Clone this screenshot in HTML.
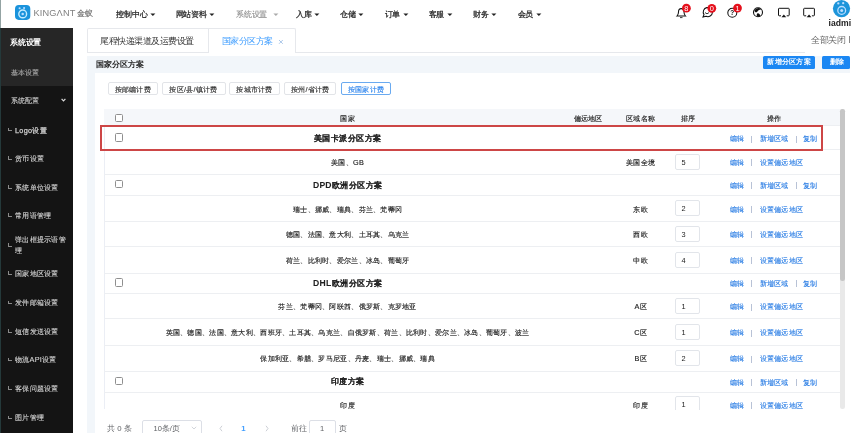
<!DOCTYPE html>
<html><head><meta charset="utf-8">
<style>
*{box-sizing:border-box;margin:0;padding:0}
html,body{width:851px;height:433px;overflow:hidden;background:#fff}
body{position:relative;font-family:"Liberation Sans",sans-serif;color:#303133}
.a{position:absolute;white-space:nowrap}
.c{position:absolute;white-space:nowrap;transform:translateX(-50%)}
.nav{font-size:7.9px;letter-spacing:-0.1px;font-weight:500;color:#222;-webkit-text-stroke:0.22px #222;top:10px;line-height:10px}
.tri{position:absolute;width:0;height:0;border-left:2.6px solid transparent;border-right:2.6px solid transparent;border-top:2.8px solid #2b2b2b}
.side{position:absolute;left:1px;width:72px;top:28px;bottom:0;background:#141414}
.sitem{position:absolute;left:15px;font-size:7.28px;letter-spacing:0.28px;color:#d2d2d2;-webkit-text-stroke:0.12px #d2d2d2;line-height:9px}
.lsym{position:absolute;left:8.2px;width:3.4px;height:3.6px;border-left:0.7px solid #8a8a8a;border-bottom:0.7px solid #8a8a8a}
.btn{position:absolute;top:82px;height:13px;border:0.8px solid #e2e4e8;border-radius:2px;font-size:7.28px;letter-spacing:0.28px;color:#333;line-height:13.2px;text-align:center;background:#fff;-webkit-text-stroke:0.15px #333}
.row{position:absolute;left:104.2px;width:736px;border-bottom:0.8px solid #edeff2}
.cb{position:absolute;left:114.6px;width:8.1px;height:8.4px;border:0.85px solid #8f8f8f;border-radius:1.5px;background:#fff}
.t{font-size:7.28px;letter-spacing:0.28px;color:#222;-webkit-text-stroke:0.15px #222;line-height:9px}
.g{font-size:7.7px;letter-spacing:0.5px;font-weight:bold;color:#1f1f1f;line-height:10px;-webkit-text-stroke:0.05px #1f1f1f}
.lk{font-size:7.28px;letter-spacing:0.28px;color:#2a7de4;-webkit-text-stroke:0.12px #2a7de4;line-height:9px}
.sep{position:absolute;width:0.7px;height:7px;background:#b8c2d6}
.inp{position:absolute;left:675px;width:25.2px;height:16.2px;border:0.8px solid #e2e5ea;border-radius:2px;font-size:7.4px;line-height:15.6px;padding-left:5.2px;color:#222;background:#fff}
</style></head><body><div style="position:absolute;left:0;top:0;width:851px;height:433px;will-change:transform;overflow:hidden">
<!-- left strip -->
<div class="a" style="left:0;top:0;width:1px;height:28px;background:#93a3a3"></div>
<div class="a" style="left:0;top:28px;width:1px;height:405px;background:#24393a"></div>

<!-- logo -->
<svg class="a" style="left:15px;top:5px" width="16" height="16" viewBox="0 0 16 16">
<rect x="0" y="0" width="15.3" height="14.9" rx="3.8" fill="#1a93dc"/>
<circle cx="4.6" cy="3.3" r="1.05" fill="#bdf"/><circle cx="9.1" cy="3.1" r="1.05" fill="#bdf"/>
<circle cx="7.7" cy="8.9" r="3.9" fill="none" stroke="#c4ecff" stroke-width="1.4"/>
<circle cx="7.7" cy="8.9" r="1.25" fill="#bdf"/>
</svg>
<div class="a" style="left:33.5px;top:8.1px;font-size:9.2px;line-height:10px;color:#808080;letter-spacing:0.16px">KINGΛNT</div>
<div class="a" style="left:77px;top:9px;font-size:7.8px;letter-spacing:0.3px;line-height:9px;color:#666;-webkit-text-stroke:0.15px #666">金蚁</div>

<!-- nav -->
<div class="a nav" style="left:116px">控制中心</div><svg class="a" style="left:149.5px;top:13px" width="6" height="4" viewBox="0 0 6 4"><path d="M0.4 0.4 L5.4 0.4 L2.9 3.1 Z" fill="#222"/></svg>
<div class="a nav" style="left:175.5px">网站资料</div><svg class="a" style="left:209.3px;top:13px" width="6" height="4" viewBox="0 0 6 4"><path d="M0.4 0.4 L5.4 0.4 L2.9 3.1 Z" fill="#222"/></svg>
<div class="a nav" style="left:235.8px;color:#8e8e8e;font-weight:normal;-webkit-text-stroke:0.12px #8e8e8e">系统设置</div><svg class="a" style="left:273px;top:13px" width="6" height="4" viewBox="0 0 6 4"><path d="M0.4 0.4 L5.4 0.4 L2.9 3.1 Z" fill="#aaa"/></svg>
<div class="a nav" style="left:296px">入库</div><svg class="a" style="left:313.9px;top:13px" width="6" height="4" viewBox="0 0 6 4"><path d="M0.4 0.4 L5.4 0.4 L2.9 3.1 Z" fill="#222"/></svg>
<div class="a nav" style="left:340px">仓储</div><svg class="a" style="left:358.2px;top:13px" width="6" height="4" viewBox="0 0 6 4"><path d="M0.4 0.4 L5.4 0.4 L2.9 3.1 Z" fill="#222"/></svg>
<div class="a nav" style="left:384.6px">订单</div><svg class="a" style="left:402.7px;top:13px" width="6" height="4" viewBox="0 0 6 4"><path d="M0.4 0.4 L5.4 0.4 L2.9 3.1 Z" fill="#222"/></svg>
<div class="a nav" style="left:428.5px">客服</div><svg class="a" style="left:446.7px;top:13px" width="6" height="4" viewBox="0 0 6 4"><path d="M0.4 0.4 L5.4 0.4 L2.9 3.1 Z" fill="#222"/></svg>
<div class="a nav" style="left:473px">财务</div><svg class="a" style="left:491.2px;top:13px" width="6" height="4" viewBox="0 0 6 4"><path d="M0.4 0.4 L5.4 0.4 L2.9 3.1 Z" fill="#222"/></svg>
<div class="a nav" style="left:517.6px">会员</div><svg class="a" style="left:535.7px;top:13px" width="6" height="4" viewBox="0 0 6 4"><path d="M0.4 0.4 L5.4 0.4 L2.9 3.1 Z" fill="#222"/></svg>

<!-- header icons -->
<svg class="a" style="left:670px;top:0" width="181" height="28" viewBox="670 0 181 28">
 <!-- bell -->
 <path d="M677 16 Q678.5 14.5 678.5 12 Q678.5 8.6 681.2 8.6 Q684 8.6 684 12 Q684 14.5 685.5 16 Z" fill="none" stroke="#111" stroke-width="1.05"/>
 <line x1="680" y1="17.6" x2="682.5" y2="17.6" stroke="#222" stroke-width="0.9"/>
 <circle cx="686.4" cy="8.2" r="4.4" fill="#e5101c"/>
 <text x="686.4" y="10.8" font-size="7.4" fill="#fff" text-anchor="middle" font-family="Liberation Sans">8</text>
 <!-- chat -->
 <path d="M703 17 L704 14.6 A4.6 4.6 0 1 1 706 16.3 Z" fill="none" stroke="#111" stroke-width="1.05"/>
 <path d="M705 12.6 Q707 15 709 12.6" fill="none" stroke="#222" stroke-width="0.9"/>
 <circle cx="711.8" cy="8.3" r="4.4" fill="#e5101c"/>
 <text x="711.8" y="10.9" font-size="7.4" fill="#fff" text-anchor="middle" font-family="Liberation Sans">0</text>
 <!-- help -->
 <circle cx="732.3" cy="12.8" r="4.5" fill="none" stroke="#111" stroke-width="1.05"/>
 <text x="732.3" y="15.4" font-size="6.5" fill="#111" text-anchor="middle" font-family="Liberation Sans" font-weight="bold">?</text>
 <circle cx="737.5" cy="8.1" r="4.4" fill="#e5101c"/>
 <text x="737.5" y="10.7" font-size="7.4" fill="#fff" text-anchor="middle" font-family="Liberation Sans">1</text>
 <!-- globe -->
 <circle cx="758" cy="12.25" r="4.5" fill="#fff" stroke="#111" stroke-width="1.1"/>
 <path d="M754.2 10.6 Q755.5 8.2 758.6 7.9 Q760.6 8.2 761.2 9.4 Q759.6 9.4 758.2 10.6 Q757.4 12 756 12.6 Q754.8 12.2 754.2 10.6Z" fill="#111"/>
 <path d="M757.2 13.4 Q758.6 13 759.8 14.6 Q760.6 16 760.4 16.6 Q758.6 17 757.4 16.6 Q755.8 15.4 757.2 13.4Z" fill="#111"/>
 <!-- airplay 1 -->
 <path d="M781 15.8 L779.2 15.8 Q778.5 15.8 778.5 15 L778.5 9 Q778.5 8.3 779.2 8.3 L788.5 8.3 Q789.2 8.3 789.2 9 L789.2 15 Q789.2 15.8 788.5 15.8 L786.7 15.8" fill="none" stroke="#111" stroke-width="1"/>
 <path d="M781.5 17.2 L786.2 17.2 L783.85 14.6 Z" fill="#111"/>
 <!-- airplay 2 -->
 <path d="M806.2 15.8 L804.4 15.8 Q803.7 15.8 803.7 15 L803.7 9 Q803.7 8.3 804.4 8.3 L813.7 8.3 Q814.4 8.3 814.4 9 L814.4 15 Q814.4 15.8 813.7 15.8 L811.9 15.8" fill="none" stroke="#111" stroke-width="1"/>
 <path d="M806.7 17.2 L811.4 17.2 L809.05 14.6 Z" fill="#111"/>
 <!-- avatar -->
 <circle cx="841.5" cy="8.6" r="8.6" fill="#1d95da"/>
 <circle cx="838.3" cy="3.4" r="1.15" fill="#bdf"/><circle cx="843.2" cy="3.2" r="1.15" fill="#bdf"/>
 <circle cx="841.7" cy="10.4" r="3.9" fill="none" stroke="#bdf" stroke-width="1.3"/>
 <circle cx="841.7" cy="10.4" r="1.5" fill="#bdf"/>
</svg>
<div class="a" style="left:828.6px;top:17.5px;font-size:8.6px;font-weight:bold;line-height:10px;color:#222">iadmi</div>

<!-- sidebar -->
<div class="side"></div>
<div class="a" style="left:1px;top:28px;width:72px;height:58px;background:#262626"></div>
<div class="a" style="left:9.8px;top:38px;font-size:7.9px;letter-spacing:-0.1px;font-weight:bold;color:#fff;line-height:9px">系统设置</div>
<div class="a" style="left:10.5px;top:67.5px;font-size:7.28px;letter-spacing:0.28px;color:#a8a8a8;-webkit-text-stroke:0.12px #a8a8a8;line-height:9px">基本设置</div>
<div class="a" style="left:10.5px;top:95.5px;font-size:7.28px;letter-spacing:0.28px;color:#c8c8c8;-webkit-text-stroke:0.12px #c8c8c8;line-height:9px">系统配置</div>
<svg class="a" style="left:61px;top:98px" width="5" height="4" viewBox="0 0 5 4"><path d="M0.6 0.9 L2.5 2.9 L4.4 0.9" fill="none" stroke="#ddd" stroke-width="1.2"/></svg>

<div class="lsym" style="top:127.8px"></div><div class="sitem" style="top:125.5px;-webkit-text-stroke:0.25px #d2d2d2">Logo设置</div>
<div class="lsym" style="top:156px"></div><div class="sitem" style="top:154px">货币设置</div>
<div class="lsym" style="top:185px"></div><div class="sitem" style="top:182.5px">系统单位设置</div>
<div class="lsym" style="top:213.3px"></div><div class="sitem" style="top:211px">常用语管理</div>
<div class="lsym" style="top:243px"></div><div class="sitem" style="top:235.2px;line-height:10.4px;white-space:normal;width:52px">弹出框提示语管理</div>
<div class="lsym" style="top:271.2px"></div><div class="sitem" style="top:268.7px">国家地区设置</div>
<div class="lsym" style="top:300.7px"></div><div class="sitem" style="top:298.2px">发件邮箱设置</div>
<div class="lsym" style="top:329px"></div><div class="sitem" style="top:326.5px">短信发送设置</div>
<div class="lsym" style="top:357.7px"></div><div class="sitem" style="top:355.2px">物流API设置</div>
<div class="lsym" style="top:386.4px"></div><div class="sitem" style="top:383.9px">客保问题设置</div>
<div class="lsym" style="top:415.5px"></div><div class="sitem" style="top:413px">图片管理</div>

<!-- tabs -->
<div class="a" style="left:87px;top:52px;width:718px;height:0.8px;background:#e6e8ec"></div>
<div class="a" style="left:87px;top:28px;width:209.3px;height:24.8px;border:0.8px solid #e6e8ec;border-bottom:none;border-radius:2px 2px 0 0;background:#fff"></div>
<div class="a" style="left:87px;top:52px;width:121.5px;height:0.8px;background:#e6e8ec"></div>
<div class="a" style="left:208px;top:28.5px;width:0.8px;height:24.3px;background:#e6e8ec"></div>
<div class="a" style="left:100.2px;top:36.3px;font-size:8.5px;letter-spacing:-0.5px;line-height:10px;color:#333">尾程快递渠道及运费设置</div>
<div class="a" style="left:221.5px;top:36.3px;font-size:8.5px;letter-spacing:-0.5px;line-height:10px;color:#409eff">国家分区方案</div>
<svg class="a" style="left:278px;top:39px" width="6" height="6" viewBox="0 0 6 6"><path d="M1 1 L4.8 4.8 M4.8 1 L1 4.8" stroke="#8fb4e0" stroke-width="0.75"/></svg>
<div class="a" style="left:811px;top:34.5px;font-size:8.5px;letter-spacing:-0.5px;line-height:10px;color:#666">全部关闭</div><div class="a" style="left:849px;top:35.8px;width:0.8px;height:7.2px;background:#888"></div>

<!-- content bg -->
<div class="a" style="left:87px;top:55.5px;width:764px;height:378px;background:#f2f6fa"></div>
<div class="a" style="left:95px;top:73px;width:756px;height:360px;background:#fff"></div>
<div class="a" style="left:96px;top:59.8px;font-size:7.9px;letter-spacing:-0.1px;font-weight:bold;line-height:10px;color:#1f1f1f">国家分区方案</div>
<div class="a" style="left:763.2px;top:56px;width:51.9px;height:12.5px;border-radius:1.5px;background:#1b87f3;color:#fff;font-size:7.28px;letter-spacing:0.28px;font-weight:bold;line-height:12.7px;text-align:center">新增分区方案</div>
<div class="a" style="left:822px;top:56.1px;width:28px;padding-left:3px;height:12.5px;border-radius:1.5px;background:#1b87f3;color:#fff;font-size:7.28px;letter-spacing:0.28px;font-weight:bold;line-height:12.7px;text-align:center">删除</div>
<div class="a" style="left:849.5px;top:55.5px;width:1.5px;height:378px;background:#fff"></div>

<!-- filter buttons -->
<div class="btn" style="left:107.5px;width:50.5px">按邮编计费</div>
<div class="btn" style="left:161.6px;width:64px">按区/县/镇计费</div>
<div class="btn" style="left:229px;width:51px">按城市计费</div>
<div class="btn" style="left:284px;width:52.4px">按州/省计费</div>
<div class="btn" style="left:341px;width:50px;border-color:#6aaaf0;color:#3388ee;-webkit-text-stroke:0.15px #3388ee">按国家计费</div>

<!-- table -->
<div class="a" style="left:104.2px;top:109px;width:0.8px;height:300px;background:#ebeef5"></div>
<div class="row" style="top:109px;height:17px;background:#f5f7fa"></div>
<div class="cb" style="top:113.7px"></div>
<div class="c t" style="left:347.6px;top:114.1px">国家</div>
<div class="c t" style="left:588.2px;top:114.1px">偏远地区</div>
<div class="c t" style="left:640.7px;top:114.1px">区域名称</div>
<div class="c t" style="left:688.4px;top:114.1px">排序</div>
<div class="c t" style="left:774.5px;top:114.1px">操作</div>

<div class="a" style="left:104px;top:126px;width:737px;height:283.7px;overflow:hidden">
<div class="row" style="left:0.2px;top:0.00px;height:23.90px"></div>
<div class="cb" style="left:10.80px;top:7.40px;"></div>
<div class="c g" style="left:243.80px;top:7.50px;">美国卡派分区方案</div>
<div class="a lk" style="left:625.80px;top:8.30px;">编辑</div>
<div class="sep" style="left:646.90px;top:9.60px;"></div>
<div class="a lk" style="left:655.60px;top:8.30px;">新增区域</div>
<div class="sep" style="left:691.50px;top:9.60px;"></div>
<div class="a lk" style="left:699.00px;top:8.30px;">复制</div>
<div class="row" style="left:0.2px;top:23.50px;height:25.15px"></div>
<div class="c t" style="left:243.60px;top:31.90px;">美国、GB</div>
<div class="c t" style="left:536.70px;top:31.90px;">美国全境</div>
<div class="inp" style="left:571.20px;top:27.60px;">5</div>
<div class="a lk" style="left:625.80px;top:31.90px;">编辑</div>
<div class="sep" style="left:646.90px;top:33.20px;"></div>
<div class="a lk" style="left:655.60px;top:31.90px;">设置偏远地区</div>
<div class="row" style="left:0.2px;top:48.25px;height:21.65px"></div>
<div class="cb" style="left:10.80px;top:53.80px;"></div>
<div class="c g" style="left:243.80px;top:53.90px;"><span style="letter-spacing:0.1px;font-size:8.6px">DPD</span>欧洲分区方案</div>
<div class="a lk" style="left:625.80px;top:54.70px;">编辑</div>
<div class="sep" style="left:646.90px;top:56.00px;"></div>
<div class="a lk" style="left:655.60px;top:54.70px;">新增区域</div>
<div class="sep" style="left:691.50px;top:56.00px;"></div>
<div class="a lk" style="left:699.00px;top:54.70px;">复制</div>
<div class="row" style="left:0.2px;top:69.50px;height:26.10px"></div>
<div class="c t" style="left:243.60px;top:78.60px;">瑞士、挪威、瑞典、芬兰、梵蒂冈</div>
<div class="c t" style="left:536.70px;top:78.60px;">东欧</div>
<div class="inp" style="left:571.20px;top:74.30px;">2</div>
<div class="a lk" style="left:625.80px;top:78.60px;">编辑</div>
<div class="sep" style="left:646.90px;top:79.90px;"></div>
<div class="a lk" style="left:655.60px;top:78.60px;">设置偏远地区</div>
<div class="row" style="left:0.2px;top:95.20px;height:25.70px"></div>
<div class="c t" style="left:243.60px;top:104.10px;">德国、法国、意大利、土耳其、乌克兰</div>
<div class="c t" style="left:536.70px;top:104.10px;">西欧</div>
<div class="inp" style="left:571.20px;top:99.80px;">3</div>
<div class="a lk" style="left:625.80px;top:104.10px;">编辑</div>
<div class="sep" style="left:646.90px;top:105.40px;"></div>
<div class="a lk" style="left:655.60px;top:104.10px;">设置偏远地区</div>
<div class="row" style="left:0.2px;top:120.50px;height:27.20px"></div>
<div class="c t" style="left:243.60px;top:129.90px;">荷兰、比利时、爱尔兰、冰岛、葡萄牙</div>
<div class="c t" style="left:536.70px;top:129.90px;">中欧</div>
<div class="inp" style="left:571.20px;top:125.60px;">4</div>
<div class="a lk" style="left:625.80px;top:129.90px;">编辑</div>
<div class="sep" style="left:646.90px;top:131.20px;"></div>
<div class="a lk" style="left:655.60px;top:129.90px;">设置偏远地区</div>
<div class="row" style="left:0.2px;top:147.30px;height:20.40px"></div>
<div class="cb" style="left:10.80px;top:152.20px;"></div>
<div class="c g" style="left:243.80px;top:152.30px;"><span style="letter-spacing:0.3px;font-size:8.6px">DHL</span>欧洲分区方案</div>
<div class="a lk" style="left:625.80px;top:153.10px;">编辑</div>
<div class="sep" style="left:646.90px;top:154.40px;"></div>
<div class="a lk" style="left:655.60px;top:153.10px;">新增区域</div>
<div class="sep" style="left:691.50px;top:154.40px;"></div>
<div class="a lk" style="left:699.00px;top:153.10px;">复制</div>
<div class="row" style="left:0.2px;top:167.30px;height:26.10px"></div>
<div class="c t" style="left:243.60px;top:176.30px;">芬兰、梵蒂冈、阿联酋、俄罗斯、克罗地亚</div>
<div class="c t" style="left:536.70px;top:176.30px;">A区</div>
<div class="inp" style="left:571.20px;top:172.00px;">1</div>
<div class="a lk" style="left:625.80px;top:176.30px;">编辑</div>
<div class="sep" style="left:646.90px;top:177.60px;"></div>
<div class="a lk" style="left:655.60px;top:176.30px;">设置偏远地区</div>
<div class="row" style="left:0.2px;top:193.00px;height:26.70px"></div>
<div class="c t" style="left:243.60px;top:202.30px;">英国、德国、法国、意大利、西班牙、土耳其、乌克兰、白俄罗斯、荷兰、比利时、爱尔兰、冰岛、葡萄牙、波兰</div>
<div class="c t" style="left:536.70px;top:202.30px;">C区</div>
<div class="inp" style="left:571.20px;top:198.00px;">1</div>
<div class="a lk" style="left:625.80px;top:202.30px;">编辑</div>
<div class="sep" style="left:646.90px;top:203.60px;"></div>
<div class="a lk" style="left:655.60px;top:202.30px;">设置偏远地区</div>
<div class="row" style="left:0.2px;top:219.30px;height:26.35px"></div>
<div class="c t" style="left:243.60px;top:228.40px;">保加利亚、希腊、罗马尼亚、丹麦、瑞士、挪威、瑞典</div>
<div class="c t" style="left:536.70px;top:228.40px;">B区</div>
<div class="inp" style="left:571.20px;top:224.10px;">2</div>
<div class="a lk" style="left:625.80px;top:228.40px;">编辑</div>
<div class="sep" style="left:646.90px;top:229.70px;"></div>
<div class="a lk" style="left:655.60px;top:228.40px;">设置偏远地区</div>
<div class="row" style="left:0.2px;top:245.25px;height:21.65px"></div>
<div class="cb" style="left:10.80px;top:250.80px;"></div>
<div class="c g" style="left:243.80px;top:250.90px;">印度方案</div>
<div class="a lk" style="left:625.80px;top:251.70px;">编辑</div>
<div class="sep" style="left:646.90px;top:253.00px;"></div>
<div class="a lk" style="left:655.60px;top:251.70px;">新增区域</div>
<div class="sep" style="left:691.50px;top:253.00px;"></div>
<div class="a lk" style="left:699.00px;top:251.70px;">复制</div>
<div class="row" style="left:0.2px;top:266.50px;height:26.40px"></div>
<div class="c t" style="left:243.60px;top:274.60px;">印度</div>
<div class="c t" style="left:536.70px;top:274.60px;">印度</div>
<div class="inp" style="left:571.20px;top:270.30px;">1</div>
<div class="a lk" style="left:625.80px;top:274.60px;">编辑</div>
<div class="sep" style="left:646.90px;top:275.90px;"></div>
<div class="a lk" style="left:655.60px;top:274.60px;">设置偏远地区</div>
</div>
<!-- scrollbar -->
<div class="a" style="left:840px;top:109px;width:4.5px;height:300px;border-radius:2.2px;background:#e9e9e9"></div><div class="a" style="left:840px;top:109px;width:4.5px;height:172px;border-radius:2.2px;background:#c6c6c6"></div>

<!-- red box -->
<div class="a" style="left:100.2px;top:124.6px;width:723px;height:26.5px;border:2px solid #cd4646"></div>

<!-- pagination -->
<div class="a" style="left:107px;top:424.2px;font-size:7.8px;line-height:10px;color:#606266">共 0 条</div>
<div class="a" style="left:141.6px;top:420.4px;width:60.5px;height:16px;border:0.7px solid #dcdfe6;border-radius:2px;background:#fff"></div>
<div class="a" style="left:153.5px;top:424.2px;font-size:7.5px;line-height:10px;color:#606266">10条/页</div>
<svg class="a" style="left:191px;top:426px" width="6" height="4" viewBox="0 0 6 4"><path d="M0.8 0.8 L3 3 L5.2 0.8" fill="none" stroke="#c0c4cc" stroke-width="0.7"/></svg>
<svg class="a" style="left:218.5px;top:424.5px" width="4" height="7" viewBox="0 0 4 7"><path d="M3 0.8 L1 3.5 L3 6.2" fill="none" stroke="#c0c4cc" stroke-width="0.8"/></svg>
<div class="a" style="left:241.3px;top:424.2px;font-size:7.8px;font-weight:bold;line-height:10px;color:#409eff">1</div>
<svg class="a" style="left:265px;top:424.5px" width="4" height="7" viewBox="0 0 4 7"><path d="M1 0.8 L3 3.5 L1 6.2" fill="none" stroke="#c0c4cc" stroke-width="0.8"/></svg>
<div class="a" style="left:290.5px;top:424.2px;font-size:7.5px;line-height:10px;color:#606266">前往</div>
<div class="a" style="left:308.6px;top:420.4px;width:27.7px;height:16px;border:0.7px solid #dcdfe6;border-radius:2px;background:#fff"></div>
<div class="a" style="left:320px;top:424.2px;font-size:7.5px;line-height:10px;color:#606266">1</div>
<div class="a" style="left:339px;top:424.2px;font-size:7.5px;line-height:10px;color:#606266">页</div>
</div></body></html>
